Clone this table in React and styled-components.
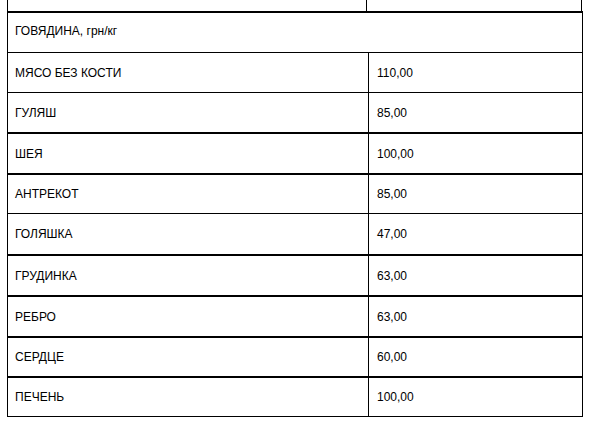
import styled, { createGlobalStyle } from "styled-components";

const GlobalStyle = createGlobalStyle`
    html, body {
        margin: 0;
        padding: 0;
        background: #ffffff;
    }
    body {
        font-family: "Liberation Sans", Arial, sans-serif;
        font-size: 12px;
        color: #000000;
    }
`;

const rows = [
    { name: "МЯСО БЕЗ КОСТИ", price: "110,00", h: 39, b: 1 },
    { name: "ГУЛЯШ", price: "85,00", h: 39, b: 2 },
    { name: "ШЕЯ", price: "100,00", h: 39, b: 2 },
    { name: "АНТРЕКОТ", price: "85,00", h: 38, b: 1 },
    { name: "ГОЛЯШКА", price: "47,00", h: 40, b: 2 },
    { name: "ГРУДИНКА", price: "63,00", h: 39, b: 2 },
    { name: "РЕБРО", price: "63,00", h: 39, b: 2 },
    { name: "СЕРДЦЕ", price: "60,00", h: 38, b: 2 },
    { name: "ПЕЧЕНЬ", price: "100,00", h: 38, b: 1 },
];

const App = () => {
    return (
        <>
            <GlobalStyle />
            <S.Page>
                <S.TopRow>
                    <S.TopCell />
                    <S.TopCell />
                </S.TopRow>
                <S.Table>
                    <S.Heading>ГОВЯДИНА, грн/кг</S.Heading>
                    {rows.map((r) => (
                        <S.Row key={r.name} $h={r.h} $b={r.b}>
                            <S.Name>{r.name}</S.Name>
                            <S.Price>{r.price}</S.Price>
                        </S.Row>
                    ))}
                </S.Table>
            </S.Page>
        </>
    );
};

const Page = styled.div`
    padding-left: 7px;
    width: 576px;
`;

const TopRow = styled.div`
    display: grid;
    grid-template-columns: 359px 215px;
    height: 11px;
    border-left: 1px solid #000;
`;

const TopCell = styled.div`
    border-right: 1px solid #000;
`;

const Table = styled.div`
    display: flex;
    flex-direction: column;
    border-top: 2px solid #000;
    border-left: 1px solid #000;
    border-right: 1px solid #000;
`;

const Heading = styled.div`
    box-sizing: border-box;
    height: 40px;
    display: flex;
    align-items: center;
    padding: 0 7px 3px;
    border-bottom: 1px solid #000;
`;

const Row = styled.div`
    display: grid;
    grid-template-columns: 361px 1fr;
    height: ${(p) => p.$h}px;
    border-bottom: ${(p) => p.$b}px solid #000;
`;

const Cell = styled.div`
    display: flex;
    align-items: center;
    padding: 0 7px;
`;

const Name = styled(Cell)`
    border-right: 1px solid #000;
`;

const Price = styled(Cell)`
    padding-left: 8px;
`;

const S = {
    Page,
    TopRow,
    TopCell,
    Table,
    Heading,
    Row,
    Name,
    Price,
};

export default App;
